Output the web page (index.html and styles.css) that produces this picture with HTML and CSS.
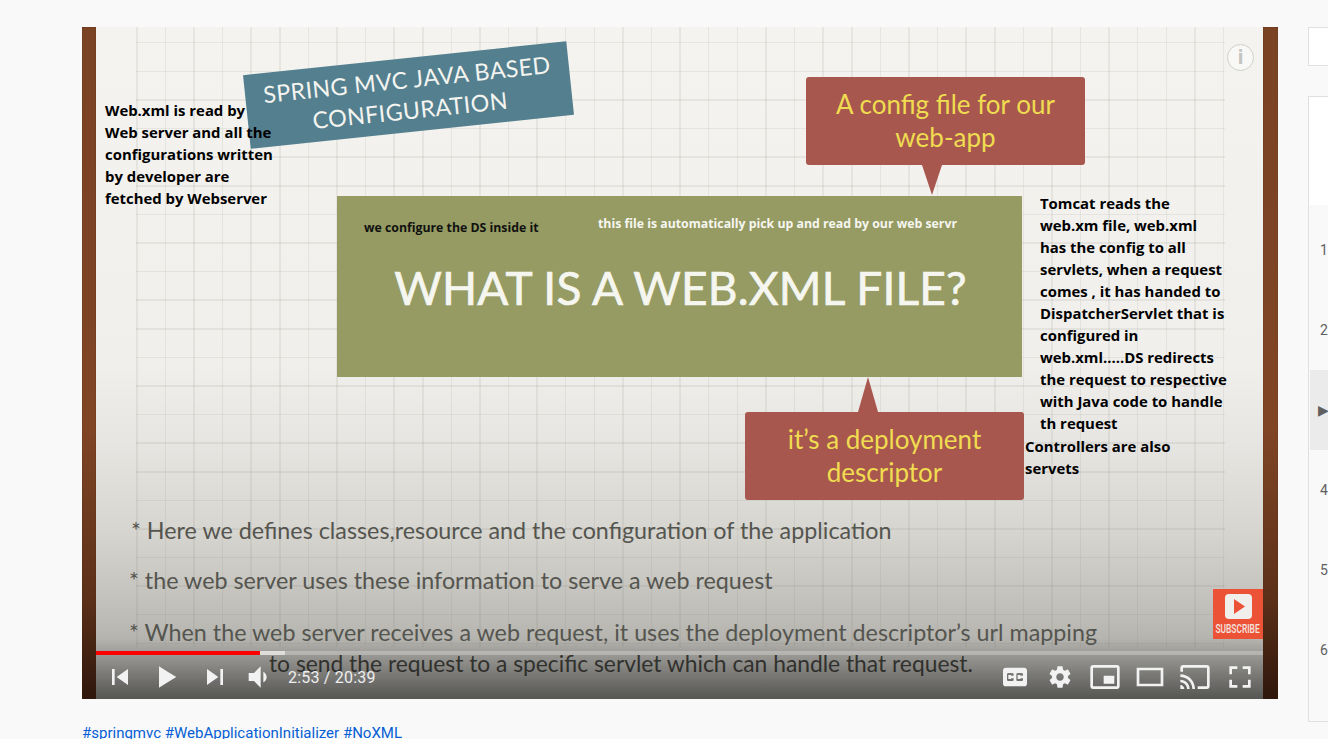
FILE: index.html
```html
<!DOCTYPE html>
<html lang="en">
<head>
    <meta charset="UTF-8">
    <meta name="viewport" content="width=device-width, initial-scale=1.0">
    <title>What is a web.xml file</title>
    <link rel="stylesheet" href="styles.css">
</head>
<body>
  <div class="page">
    <div class="main">
      <div class="video">
        <div class="wood wood-left"></div>
        <div class="slide">
          <div class="grid"></div>

          <div class="banner">SPRING MVC JAVA BASED<br>CONFIGURATION</div>

          <div class="callout callout-top">A config file for our<br>web-app</div>
          <div class="callout callout-bottom">it’s a deployment<br>descriptor</div>

          <div class="title-box">
            <span class="title">WHAT IS A WEB.XML FILE?</span>
          </div>

          <p class="bullet bullet-1">* Here we defines classes,resource and the configuration of the application</p>
          <p class="bullet bullet-2">* the web server uses these information to serve a web request</p>
          <p class="bullet bullet-3">* When the web server receives a web request, it uses the deployment descriptor’s url mapping</p>
          <p class="bullet bullet-4">to send the request to a specific servlet which can handle that request.</p>

          <p class="note note-left">Web.xml is read by<br>Web server and all the<br>configurations written<br>by developer are<br>fetched by Webserver</p>
          <p class="note note-right">Tomcat reads the<br>web.xm file, web.xml<br>has the config to all<br>servlets, when a request<br>comes , it has handed to<br>DispatcherServlet that is<br>configured in<br>web.xml.....DS redirects<br>the request to respective<br>with Java code to handle<br>th request</p>
          <p class="note note-ctrl">Controllers are also<br>servets</p>
          <p class="note-small note-ds">we configure the DS inside it</p>
          <p class="note-small note-auto">this file is automatically pick up and read by our web servr</p>

          <div class="info">i</div>
          <div class="subscribe">
            <svg class="sub-icon" viewBox="0 0 27 25"><rect width="27" height="25" rx="4" fill="#f1efec"/><path d="M9 5l11 7.5L9 20z" fill="#ec5236"/></svg>
            <div class="sub-label"><span class="sub-text">SUBSCRIBE</span></div>
          </div>
        </div>
        <div class="wood wood-right"></div>

        <div class="player">
          <div class="progress">
            <div class="played"></div>
            <div class="buffered"></div>
          </div>
          <div class="controls">
            <div class="ctl-left">
              <div class="btn"><svg viewBox="0 0 36 36"><path d="M12 12h2v12h-2zm3.5 6l8.5 6V12z"/></svg></div>
              <div class="btn"><svg viewBox="0 0 36 36"><path d="M12 26l6.500-4v-8L12 10zM18.500 22L25 18l-6.500-4z"/></svg></div>
              <div class="btn"><svg viewBox="0 0 36 36"><path d="M12 24l8.500-6L12 12zM22 12v12h2V12z"/></svg></div>
              <div class="btn"><svg viewBox="0 0 36 36"><path d="M8 21h4l5 5V10l-5 5H8zM19 14v8c1.480-.68 2.500-2.230 2.500-4 0-1.740-1.020-3.260-2.500-4z"/></svg></div>
              <span class="time">2:53 / 20:39</span>
            </div>
            <div class="ctl-right">
              <div class="btn"><svg viewBox="0 0 36 36"><path fill-rule="evenodd" d="M11 11c-1.110 0-2 .9-2 2v10c0 1.100.89 2 2 2h14c1.100 0 2-.9 2-2V13c0-1.100-.9-2-2-2zm6 6h-2v-.5h-2v3h2V19h2v1c0 .55-.45 1-1 1h-3c-.55 0-1-.45-1-1v-4c0-.55.45-1 1-1h3c.55 0 1 .45 1 1zm7 0h-2v-.5h-2v3h2V19h2v1c0 .55-.45 1-1 1h-3c-.55 0-1-.45-1-1v-4c0-.55.45-1 1-1h3c.55 0 1 .45 1 1z"/></svg></div>
              <div class="btn"><svg viewBox="0 0 36 36"><path d="m23.940 18.780c.03-.25.05-.51.05-.78 0-.27-.02-.52-.05-.78l1.680-1.320c.15-.12.19-.33.09-.51l-1.600-2.760c-.09-.17-.31-.24-.48-.17l-1.990.8c-.41-.32-.86-.58-1.350-.78l-.3-2.120c-.02-.19-.19-.33-.39-.33h-3.200c-.2 0-.36.14-.39.33l-.3 2.120c-.48.2-.93.47-1.350.78l-1.990-.8c-.18-.07-.39 0-.48.17l-1.600 2.760c-.1.17-.05.39.09.51l1.680 1.320c-.03.25-.05.52-.05.78 0 .26.02.52.05.78l-1.680 1.320c-.15.12-.19.33-.09.51l1.600 2.760c.09.17.31.24.48.17l1.990-.8c.41.32.86.58 1.350.78l.3 2.120c.02.19.19.33.39.33h3.200c.2 0 .36-.14.39-.33l.3-2.120c.48-.2.93-.47 1.350-.78l1.990.8c.18.07.39 0 .48-.17l1.600-2.760c.09-.17.05-.39-.09-.51zm-5.940 2.010c-1.540 0-2.800-1.250-2.800-2.800 0-1.540 1.250-2.800 2.800-2.800 1.540 0 2.800 1.250 2.800 2.800 0 1.540-1.250 2.800-2.800 2.800z"/></svg></div>
              <div class="btn"><svg viewBox="0 0 36 36"><path fill-rule="evenodd" d="M25 17h-8v6h8zM29 25V10.980C29 9.880 28.100 9 27 9H9C7.900 9 7 9.880 7 10.980V25c0 1.100.9 2 2 2h18c1.100 0 2-.9 2-2zm-2 .02H9V10.970h18z"/></svg></div>
              <div class="btn"><svg viewBox="0 0 36 36"><path fill-rule="evenodd" d="M28 11v14H8V11zM10 13h16v10H10z"/></svg></div>
              <div class="btn"><svg viewBox="0 0 36 36"><path d="M27 9H9c-1.100 0-2 .9-2 2v3h2v-3h18v14h-7v2h7c1.100 0 2-.9 2-2V11c0-1.100-.9-2-2-2zM7 24v3h3c0-1.660-1.340-3-3-3zm0-4v2c2.760 0 5 2.240 5 5h2c0-3.870-3.130-7-7-7zm0-4v2c4.970 0 9 4.030 9 9h2c0-6.080-4.930-11-11-11z"/></svg></div>
              <div class="btn"><svg viewBox="0 0 36 36"><path d="M10 16h2v-4h4v-2h-6zM20 10v2h4v4h2v-6zM24 24h-4v2h6v-6h-2zM12 20h-2v6h6v-2h-4z"/></svg></div>
            </div>
          </div>
        </div>
      </div>
      <div class="tags">
        <a href="#">#springmvc</a> <a href="#">#WebApplicationInitializer</a> <a href="#">#NoXML</a>
      </div>
    </div>

    <div class="side">
      <div class="side-top"></div>
      <div class="playlist">
        <div class="playlist-head"></div>
        <div class="row">1</div>
        <div class="row">2</div>
        <div class="row row-active"><span class="now">▶</span></div>
        <div class="row">4</div>
        <div class="row">5</div>
        <div class="row">6</div>
      </div>
    </div>
  </div>
</body>
</html>
```

FILE: styles.css
```css
body {
    margin: 0;
    background-color: #f9f9f9;
    font-family: Roboto, Arial, sans-serif;
    overflow: hidden;
    height: 739px;
}
.page {
    display: flex;
    padding: 27px 0 0 82px;
    height: 739px;
    box-sizing: border-box;
    overflow: hidden;
}
.main {
    flex: none;
    width: 1196px;
}

/* video */
.video {
    position: relative;
    display: flex;
    height: 672px;
    overflow: hidden;
    background-color: #000;
}
.wood {
    flex: none;
    background: linear-gradient(#7a4324, #7f4525 60%, #5c3019 85%, #2e170c);
    box-shadow: inset 0 0 1px #3a1e10;
}
.wood-left { width: 14px; }
.wood-right { width: 15px; }
.slide {
    position: relative;
    flex: 1;
    background: linear-gradient(#f4f3ef, #f0efeb 50%, #e6e5e1 62%, #d6d5d0 75%, #bdbcb7 88%, #9c9b97);
}
.grid {
    position: absolute;
    left: 40px;
    top: 0;
    width: 1089px;
    height: 620px;
    background-image:
        repeating-linear-gradient(90deg, rgba(110, 110, 100, .1) 0 1.5px, transparent 1.5px 28.6px),
        repeating-linear-gradient(180deg, transparent 0 15px, rgba(110, 110, 100, .1) 15px 16.5px, transparent 16.5px 28.6px);
}
.banner {
    position: absolute;
    left: 150px;
    top: 31px;
    width: 325px;
    height: 74px;
    transform: rotate(-6deg);
    background-color: #537f8e;
    color: #f4f4f0;
    font-family: Lato, sans-serif;
    font-size: 23.300px;
    line-height: 31px;
    letter-spacing: .4px;
    text-align: center;
    white-space: nowrap;
    padding-top: 6px;
    box-sizing: border-box;
}
.callout {
    position: absolute;
    width: 279px;
    height: 88px;
    padding-top: 11px;
    box-sizing: border-box;
    border-radius: 3px;
    background-color: #a8574e;
    color: #efdc50;
    font-family: Lato, sans-serif;
    font-size: 26px;
    line-height: 33px;
    text-align: center;
}
.callout::after {
    content: "";
    position: absolute;
    width: 0;
    height: 0;
    border-left: 10px solid transparent;
    border-right: 10px solid transparent;
}
.callout-top {
    left: 710px;
    top: 50px;
}
.callout-top::after {
    left: 116px;
    top: 88px;
    border-top: 30px solid #a8574e;
}
.callout-bottom {
    left: 649px;
    top: 385px;
}
.callout-bottom::after {
    left: 113px;
    top: -35px;
    border-bottom: 35px solid #a8574e;
}
.title-box {
    position: absolute;
    left: 241px;
    top: 169px;
    width: 685px;
    height: 181px;
    display: flex;
    justify-content: center;
    align-items: center;
    background-color: #959b62;
}
.title {
    color: #f6f6f0;
    font-family: Lato, sans-serif;
    font-size: 46px;
    letter-spacing: .2px;
    -webkit-text-stroke: .7px #f6f6f0;
    position: relative;
    top: 1px;
    left: 1px;
    white-space: nowrap;
}
.bullet {
    position: absolute;
    margin: 0;
    color: #55554f;
    font-family: Lato, sans-serif;
    font-size: 23.300px;
    line-height: 30px;
    white-space: nowrap;
}
.bullet-1 { left: 35px; top: 488px; }
.bullet-2 { left: 33px; top: 538px; }
.bullet-3 { left: 33px; top: 590px; }
.bullet-4 { left: 173px; top: 621px; color: #3c3c38; font-size: 22.800px; }
.note {
    position: absolute;
    margin: 0;
    color: #000;
    font-family: "Open Sans", sans-serif;
    font-weight: 700;
    font-size: 14.900px;
    line-height: 22px;
    white-space: nowrap;
}
.note-left { left: 9px; top: 72px; }
.note-right { left: 944px; top: 165px; }
.note-ctrl { left: 929px; top: 408px; }
.note-small {
    position: absolute;
    margin: 0;
    font-family: "Open Sans", sans-serif;
    font-weight: 700;
    font-size: 12.300px;
    line-height: 16px;
    white-space: nowrap;
}
.note-ds { left: 268px; top: 193px; color: #111; }
.note-auto { left: 502px; top: 189px; color: #f6f6f0; }
.info {
    position: absolute;
    left: 1131px;
    top: 17px;
    width: 27px;
    height: 27px;
    box-sizing: border-box;
    border: 1px solid #cfcfcb;
    border-radius: 50%;
    background-color: #f8f8f6;
    color: #c4c4c0;
    font-family: "Open Sans", sans-serif;
    font-weight: 700;
    font-size: 20px;
    line-height: 24px;
    text-align: center;
}
.subscribe {
    position: absolute;
    left: 1117px;
    top: 562px;
    width: 50px;
    height: 50px;
    background-color: #ec5236;
}
.sub-icon {
    display: block;
    width: 27px;
    height: 25px;
    margin: 5px auto 3px;
}
.sub-label {
    display: flex;
    justify-content: center;
}
.sub-text {
    flex: none;
    color: #f4e6e0;
    font-family: Roboto, sans-serif;
    font-weight: 500;
    font-size: 12px;
    line-height: 14px;
    transform: scaleX(.7);
    white-space: nowrap;
}

/* player chrome */
.player {
    position: absolute;
    left: 14px;
    right: 15px;
    bottom: 0;
    height: 60px;
    background: linear-gradient(rgba(0, 0, 0, 0), rgba(0, 0, 0, .45));
}
.progress {
    display: flex;
    height: 4px;
    margin-top: 12px;
    background-color: rgba(255, 255, 255, .25);
}
.played {
    width: 164px;
    background-color: #f00;
}
.buffered {
    width: 25px;
    background-color: rgba(255, 255, 255, .55);
}
.controls {
    display: flex;
    justify-content: space-between;
    height: 44px;
}
.ctl-left, .ctl-right {
    display: flex;
    align-items: center;
}
.ctl-right {
    margin-right: 1px;
}
.btn {
    display: flex;
    justify-content: center;
    align-items: center;
    width: 47.500px;
    height: 44px;
}
.ctl-right .btn {
    width: 45px;
}
.btn svg {
    flex: none;
    width: 48px;
    height: 48px;
    fill: #f2f2f2;
}
.time {
    margin-left: 2px;
    color: #eee;
    font-size: 16px;
    letter-spacing: .2px;
    white-space: nowrap;
}
.tags {
    padding-top: 25px;
    font-size: 15px;
    line-height: 18px;
}
.tags a {
    color: #065fd4;
    text-decoration: none;
}

/* right column */
.side {
    flex: 1;
    min-width: 0;
    margin-left: 30px;
    overflow: hidden;
}
.side-top {
    height: 39px;
    box-sizing: border-box;
    border: 1px solid #e0e0e0;
    border-right: none;
    background-color: #fff;
    margin-bottom: 30px;
}
.playlist {
    height: 626px;
    box-sizing: border-box;
    border: 1px solid #e0e0e0;
    border-right: none;
}
.playlist-head {
    height: 108px;
    margin-bottom: 5px;
    background-color: #fff;
}
.row {
    display: flex;
    align-items: center;
    height: 80px;
    margin-left: 1px;
    padding-left: 10px;
    color: #606060;
    font-size: 14px;
    white-space: nowrap;
}
.row-active {
    background-color: #ebebeb;
    padding-left: 8px;
}
.now {
    font-family: "DejaVu Sans", sans-serif;
    font-size: 14px;
}
```
